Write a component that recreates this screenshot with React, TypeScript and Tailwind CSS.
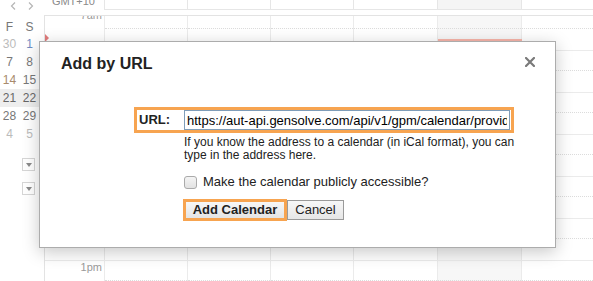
const hours = ["7am", "8am", "9am", "10am", "11am", "12pm", "1pm"];
const dayWidths = ["w-[83px]", "w-[83px]", "w-[83px]", "w-[84px]", "w-[84px]", "w-[84px]"];
const TODAY = 4;

const weeks: { f: string; s: string; fc: string; sc: string; hl?: boolean }[] = [
  { f: "30", s: "1", fc: "text-[#bbbbbb]", sc: "text-[#6f8cc4]" },
  { f: "7", s: "8", fc: "text-[#777777]", sc: "text-[#777777]" },
  { f: "14", s: "15", fc: "text-[#a88a6c]", sc: "text-[#777777]" },
  { f: "21", s: "22", fc: "text-[#666666]", sc: "text-[#666666]", hl: true },
  { f: "28", s: "29", fc: "text-[#777777]", sc: "text-[#777777]" },
  { f: "4", s: "5", fc: "text-[#bbbbbb]", sc: "text-[#bbbbbb]" },
];

function DropBox() {
  return (
    <div className="ml-[22px] flex h-[13px] w-[13px] justify-center border border-[#d6d6d6] bg-white pt-[4px]">
      <div className="h-0 w-0 border-x-[3px] border-t-[4px] border-x-transparent border-t-[#8a8a8a]" />
    </div>
  );
}

function Sidebar() {
  return (
    <div className="w-[44px] shrink-0">
      {/* month nav */}
      <div className="flex h-[20px] pt-[2px]">
        <svg className="ml-[10px]" width="6" height="8" viewBox="0 0 6 8">
          <path d="M5 0.5 L1.5 4 L5 7.5" fill="none" stroke="#b5b5b5" strokeWidth="1.2" />
        </svg>
        <svg className="ml-[12px]" width="6" height="8" viewBox="0 0 6 8">
          <path d="M1 0.5 L4.5 4 L1 7.5" fill="none" stroke="#b5b5b5" strokeWidth="1.2" />
        </svg>
      </div>

      {/* mini month */}
      <div className="text-[12px]">
        <div className="flex h-[15px] w-[42px] leading-[15px] text-[#777777]">
          <span className="w-[19px] text-center">F</span>
          <span className="w-[21px] text-center">S</span>
        </div>
        {weeks.map((w) => (
          <div
            key={w.f}
            className={`flex h-[18px] w-[42px] leading-[18px] ${w.hl ? "bg-[#eeeeee]" : ""}`}
          >
            <span className={`w-[19px] text-center ${w.fc}`}>{w.f}</span>
            <span className={`w-[21px] text-center ${w.sc}`}>{w.s}</span>
          </div>
        ))}
      </div>

      {/* calendar list toggles */}
      <div className="mt-[15px]">
        <DropBox />
      </div>
      <div className="mt-[11px]">
        <DropBox />
      </div>
    </div>
  );
}

function WeekGrid() {
  return (
    <div className="flex flex-1 flex-col">
      {/* all-day header */}
      <div className="flex h-[10px]">
        <div className="relative w-[60px]">
          <span className="absolute right-[9px] top-[-5px] text-[11px] leading-[13px] text-[#8a8a8a]">
            GMT+10
          </span>
        </div>
        {dayWidths.map((w, i) => (
          <div
            key={i}
            className={`${w} shrink-0 border-b border-l border-[#e6e6e6] ${i === TODAY ? "bg-[#f5f5f5]" : ""}`}
          />
        ))}
      </div>

      {/* hour grid */}
      <div className="relative mt-[5px] flex-1 overflow-hidden border-l border-t border-[#e3e3e3]">
        <div className="-mt-[8px]">
          {hours.map((h) => (
            <div key={h} className="flex h-[42px] border-t border-[#ebebeb]">
              <div className="w-[59px] shrink-0 pr-[2px] text-right text-[11px] leading-[13px] text-[#9a9a9a]">
                {h}
              </div>
              {dayWidths.map((w, i) => (
                <div
                  key={i}
                  className={`${w} shrink-0 border-l border-[#ebebeb] ${i === TODAY ? "bg-[#f7f7f7]" : ""}`}
                >
                  <div className="h-[20px] border-b border-dotted border-[#dcdcdc]" />
                </div>
              ))}
            </div>
          ))}
        </div>

        {/* current time marker */}
        <div className="absolute left-0 top-[18px] h-0 w-0 border-y-[4px] border-l-[4px] border-y-transparent border-l-[#e07b7b]" />
        <div className="absolute left-[393px] top-[23px] h-[2px] w-[84px] bg-[#f8b5aa]" />
      </div>
    </div>
  );
}

function AddByUrlDialog() {
  return (
    <div className="absolute left-[39px] top-[41px] h-[207px] w-[517px] border border-[#acacac] bg-white text-[#222222] shadow-[0_4px_16px_rgba(0,0,0,0.22)]">
      <div className="flex items-start justify-between pl-[21px] pr-[20px] pt-[13px]">
        <h2 className="text-[16px] font-bold leading-[18px]">Add by URL</h2>
        <svg className="mt-[2px]" width="10" height="10" viewBox="0 0 10 10">
          <path d="M1 1 L9 9 M9 1 L1 9" stroke="#7a7a7a" strokeWidth="2.2" strokeLinecap="square" />
        </svg>
      </div>

      <div className="ml-[94px] mt-[34px] flex w-[380px] items-center border-[3px] border-[#f7a450]">
        <label className="w-[47px] pl-[2px] text-[13px] font-bold">URL:</label>
        <input
          readOnly
          value="https://aut-api.gensolve.com/api/v1/gpm/calendar/provider/ical"
          className="h-[20px] w-[326px] border border-[#7f9db9] px-[2px] text-[13px] text-black outline-none"
        />
      </div>

      <p className="ml-[144px] mt-[3px] w-[336px] text-[12px] leading-[13px]">
        If you know the address to a calendar (in iCal format), you can type in the address here.
      </p>

      <div className="ml-[144px] mt-[12px] flex h-[16px] items-center">
        <div className="h-[13px] w-[13px] rounded-[3px] border border-[#aaaaaa] bg-gradient-to-b from-[#f4f4f4] to-[#e2e2e2]" />
        <span className="ml-[6px] text-[13px]">Make the calendar publicly accessible?</span>
      </div>

      <div className="ml-[143px] mt-[9px] flex items-center">
        <button className="flex h-[22px] w-[104px] items-center justify-center border-[3px] border-[#f7a450] bg-gradient-to-b from-[#f7f7f7] to-[#e4e4e4] text-[13px] font-bold text-[#222222]">
          Add Calendar
        </button>
        <button className="flex h-[20px] w-[57px] items-center justify-center border border-[#9a9a9a] bg-gradient-to-b from-[#f7f7f7] to-[#e6e6e6] text-[13px] text-[#222222]">
          Cancel
        </button>
      </div>
    </div>
  );
}

export default function App() {
  return (
    <div className="relative flex h-[281px] w-[593px] overflow-hidden bg-white font-['Liberation_Sans',Arial,sans-serif]">
      <Sidebar />
      <WeekGrid />
      <AddByUrlDialog />
    </div>
  );
}
